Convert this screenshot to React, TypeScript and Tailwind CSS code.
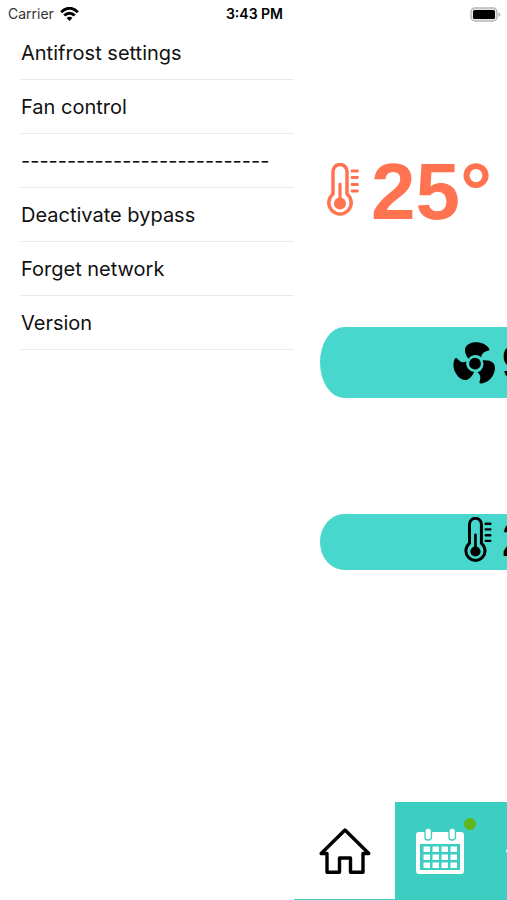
import type { ReactNode } from "react";

const menuItems = [
  "Antifrost settings",
  "Fan control",
  "---------------------------",
  "Deactivate bypass",
  "Forget network",
  "Version",
];

function WifiIcon() {
  return (
    <svg viewBox="0 0 19 14" className="h-[14px] w-[19px]" fill="none" stroke="#000" strokeWidth="2.9" aria-hidden="true">
      <path d="M1.200 5.200C6-.1 13-.1 17.800 5.200" />
      <path d="M4.300 8.600c3-3.100 7.400-3.100 10.400 0" />
      <path d="M9.500 13.900 6.600 11q2.900-2.400 5.800 0Z" fill="#000" stroke="none" />
    </svg>
  );
}

function BatteryIcon() {
  return (
    <svg viewBox="0 0 31 15" className="h-[15px] w-[31px]" aria-label="Battery full">
      <rect x="1" y="1" width="26" height="13" rx="4" fill="#e8e8e8" stroke="#b8b8b8" strokeWidth="1.500" />
      <rect x="3" y="3" width="22" height="9" rx="1.500" fill="#000" />
      <path d="M28.500 5.200q2 .9 2 2.300t-2 2.300Z" fill="#b4b4b4" />
    </svg>
  );
}

function Thermometer({ className }: { className: string }) {
  return (
    <svg viewBox="0 0 32 54" className={className} fill="none" stroke="currentColor" strokeLinecap="round" aria-hidden="true">
      <path d="M6 31V8.500a7 7 0 0 1 14 0V31a11.200 11.200 0 1 1-14 0Z" strokeWidth="3.500" />
      <path d="M13 21v20" strokeWidth="3.200" />
      <circle cx="13" cy="40.500" r="6" fill="currentColor" stroke="none" />
      <path d="M25 8h5.500M25 14.500h5.500M25 21.500h5.500M25 28h5.500" strokeWidth="2.800" />
    </svg>
  );
}

function FanIcon() {
  const blade =
    "M14.300 16.800C12 13.500 10.300 9.800 11.200 6.300 13 .8 22-.9 28 1.200c4 1.400 7.500 4.800 7.500 6.300s-2.500 1.300-4.500 2.300c-2.500 1.200-3.300 3-3.800 5.400A8.600 8.600 0 0 0 14.300 16.800Z";
  return (
    <svg viewBox="0 0 42 42" className="h-[42px] w-[42px] shrink-0 overflow-visible" fill="#000" aria-hidden="true">
      <path d={blade} />
      <path d={blade} transform="rotate(120 21 21.700)" />
      <path d={blade} transform="rotate(240 21 21.700)" />
      <circle cx="21" cy="21.700" r="5.900" />
    </svg>
  );
}

function HomeIcon() {
  return (
    <svg viewBox="0 0 52 46" className="h-[46px] w-[52px]" fill="none" stroke="#000" strokeWidth="3.400" strokeLinejoin="round" aria-hidden="true">
      <path d="M26 2 2.200 25.500H8v18.700h12.500V30h11v14.200H44V25.500h5.800Z" />
    </svg>
  );
}

function CalendarIcon() {
  return (
    <svg viewBox="0 0 48 46" className="h-[46px] w-[48px]" aria-hidden="true">
      <rect y="4" width="48" height="42" rx="3" fill="#fff" />
      <rect x="4" y="16" width="40" height="26" fill="#3dcec2" />
      {[9, 33].map((x) => (
        <rect key={x} x={x} y="0" width="6.500" height="12" rx="3" fill="#fff" stroke="#3dcec2" strokeWidth="1.300" />
      ))}
      {[18.500, 26.500, 34.500].map((y) =>
        [7.500, 16.500, 25.500, 34.500].map((x) => (
          <rect key={`${x}-${y}`} x={x} y={y} width="6.500" height="5.500" fill="#fff" />
        )),
      )}
    </svg>
  );
}

function MoreIcon() {
  return (
    <svg viewBox="0 0 84 46" className="h-[46px] w-[84px]" fill="none" stroke="#fff" strokeWidth="3.500" strokeLinecap="round" aria-hidden="true">
      <path d="M1.800 23h12M70 23h12M42 2v6M42 38v6" />
      <circle cx="42" cy="23" r="11" />
    </svg>
  );
}

function Reading({ icon, value, label, size }: { icon: ReactNode; value: string; label: string; size: string }) {
  return (
    <button
      type="button"
      aria-label={label}
      className={`flex items-center rounded-[24px/50%] bg-[#47d7cc] pl-[134px] text-black ${size}`}
    >
      <span className="flex w-12 shrink-0 items-center">{icon}</span>
      <span className="text-5xl font-bold">{value}</span>
    </button>
  );
}

export default function App() {
  return (
    <div className="flex min-h-screen flex-col overflow-hidden bg-white font-['Inter','Liberation_Sans',sans-serif] text-black">
      <header className="grid h-[26px] grid-cols-3 items-center pt-0.5 pr-1.5 pl-2 text-sm leading-none">
        <div className="flex items-center gap-1.5 text-[#333]">
          <span>Carrier</span>
          <WifiIcon />
        </div>
        <span className="text-center font-semibold">3:43 PM</span>
        <div className="flex justify-end">
          <BatteryIcon />
        </div>
      </header>

      <div className="flex flex-1">
        <nav className="w-[58%] shrink-0 pl-5" aria-label="Settings">
          <ul>
            {menuItems.map((item) => (
              <li key={item} className="border-b border-[#ebebeb]">
                <button type="button" className="block h-[53px] w-full pl-px text-left text-xl text-[#111]">
                  {item}
                </button>
              </li>
            ))}
          </ul>
        </nav>

        <main className="flex w-full shrink-0 flex-col font-['Liberation_Sans',Arial,sans-serif]">
          <div className="mt-[126px] flex h-20 items-center gap-3 pl-[33px] text-[#ff7350]">
            <Thermometer className="mb-1 h-[54px] w-8" />
            <span className="text-[80px] leading-none font-bold">25°</span>
          </div>
          <div className="mt-[95px] flex flex-col gap-[116px] px-[26px]">
            <Reading icon={<FanIcon />} value="90%" label="Fan speed" size="h-[71px]" />
            <Reading
              icon={<Thermometer className="ml-2.5 h-[46px] w-7" />}
              value="21°"
              label="Target temperature"
              size="h-14 pb-1"
            />
          </div>

          <div className="mt-auto grid h-[98px] grid-cols-5 border-b border-[#3dcec2] bg-[#3dcec2]">
            <button type="button" aria-label="Home" className="flex items-center justify-center bg-white">
              <HomeIcon />
            </button>
            <button type="button" aria-label="Schedule" className="flex items-center justify-center">
              <CalendarIcon />
              <span className="mb-[54px] size-3 rounded-full bg-[#62b51b]" />
            </button>
            <button type="button" aria-label="More" className="flex items-center justify-center">
              <MoreIcon />
            </button>
          </div>
        </main>
      </div>
    </div>
  );
}
